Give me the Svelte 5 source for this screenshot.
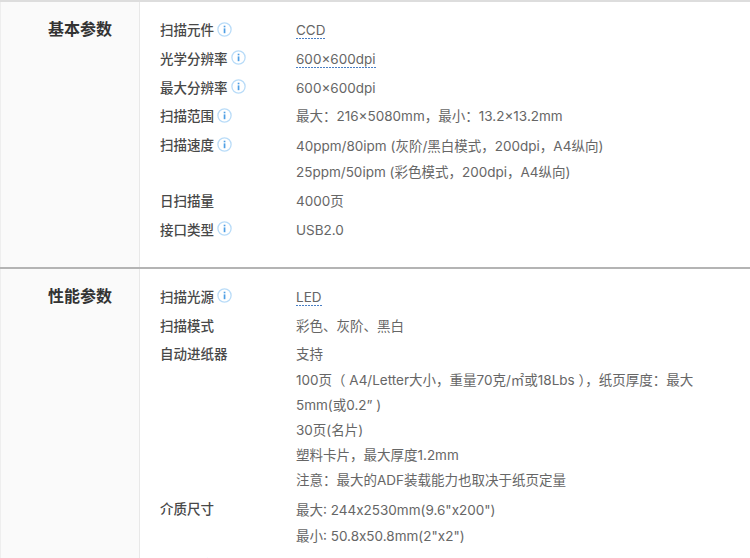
<script lang="ts">
  type Row = { label: string; tip?: boolean; lines: string[]; dashed?: boolean };
  type Section = { title: string; rows: Row[] };

  const SECTIONS: Section[] = [
    {
      title: "基本参数",
      rows: [
        { label: "扫描元件", tip: true, lines: ["CCD"], dashed: true },
        { label: "光学分辨率", tip: true, lines: ["600×600dpi"], dashed: true },
        { label: "最大分辨率", tip: true, lines: ["600×600dpi"] },
        { label: "扫描范围", tip: true, lines: ["最大：216×5080mm，最小：13.2×13.2mm"] },
        {
          label: "扫描速度",
          tip: true,
          lines: ["40ppm/80ipm (灰阶/黑白模式，200dpi，A4纵向)", "25ppm/50ipm (彩色模式，200dpi，A4纵向)"],
        },
        { label: "日扫描量", lines: ["4000页"] },
        { label: "接口类型", tip: true, lines: ["USB2.0"] },
      ],
    },
    {
      title: "性能参数",
      rows: [
        { label: "扫描光源", tip: true, lines: ["LED"], dashed: true },
        { label: "扫描模式", lines: ["彩色、灰阶、黑白"] },
        {
          label: "自动进纸器",
          lines: [
            "支持",
            "100页（ A4/Letter大小，重量70克/㎡或18Lbs ），纸页厚度：最大5mm(或0.2” )",
            "30页(名片)",
            "塑料卡片，最大厚度1.2mm",
            "注意：最大的ADF装载能力也取决于纸页定量",
          ],
        },
        { label: "介质尺寸", lines: ["最大: 244x2530mm(9.6\"x200\")", "最小: 50.8x50.8mm(2\"x2\")"] },
        { label: "耗材寿命", lines: [""] },
      ],
    },
  ];
</script>

<div class="page">
  {#each SECTIONS as s (s.title)}
    <section class="section">
      <h3 class="title">{s.title}</h3>
      <div class="rows">
        {#each s.rows as r (r.label)}
          <div class="row">
            <div class="label">
              <span>{r.label}</span>
              {#if r.tip}
                <svg class="tip" viewBox="0 0 15 15" width="15" height="15" aria-hidden="true">
                  <circle cx="7.5" cy="7.5" r="6.6" fill="none" stroke="#b9dcf8" stroke-width="1.3" />
                  <rect x="6.7" y="6.4" width="1.7" height="4.8" fill="#4f9fe4" />
                  <rect x="6.7" y="3.7" width="1.7" height="1.6" fill="#4f9fe4" />
                </svg>
              {/if}
            </div>
            <div class="value" class:two={r.lines.length === 2}>
              {#each r.lines as line}
                <p><span class:dashed={r.dashed}>{line}</span></p>
              {/each}
            </div>
          </div>
        {/each}
      </div>
    </section>
  {/each}
</div>

<style>
  :global(body) {
    margin: 0;
    background: #fff;
  }
  .page {
    width: 750px;
    height: 558px;
    overflow: hidden;
    font-family: "Inter", "Noto Sans CJK SC", sans-serif;
    font-size: 13.5px;
    color: #666;
  }
  .section {
    display: flex;
    border-top: 2px solid #b4b4b4;
  }
  .section:first-child {
    border-top-color: #ddd;
  }
  .title {
    width: 140px;
    flex: none;
    box-sizing: border-box;
    margin: 0;
    padding: 15px 0 0 47px;
    background: #fafafa;
    border-left: 1px solid #eee;
    border-right: 1px solid #e8e8e8;
    font-size: 16px;
    line-height: 24px;
    font-weight: 700;
    color: #333;
  }
  .rows {
    flex: 1;
    display: flex;
    flex-direction: column;
    gap: 3.6px;
    padding: 16px 45px 24px 20px;
    min-width: 0;
  }
  .row {
    display: flex;
  }
  .label {
    width: 136px;
    flex: none;
    display: flex;
    align-items: center;
    align-self: flex-start;
    gap: 3px;
    height: 22px;
    font-weight: 500;
    color: #484848;
  }
  .tip {
    flex: none;
  }
  .value {
    flex: 1;
    min-width: 0;
    line-height: 25.2px;
  }
  .value.two {
    line-height: 26px;
  }
  .value p {
    margin: 0;
  }
  .dashed {
    padding-bottom: 1px;
    background: linear-gradient(to right, #4a7fc4 2px, transparent 2px) left bottom / 3px 1px repeat-x;
  }
</style>
